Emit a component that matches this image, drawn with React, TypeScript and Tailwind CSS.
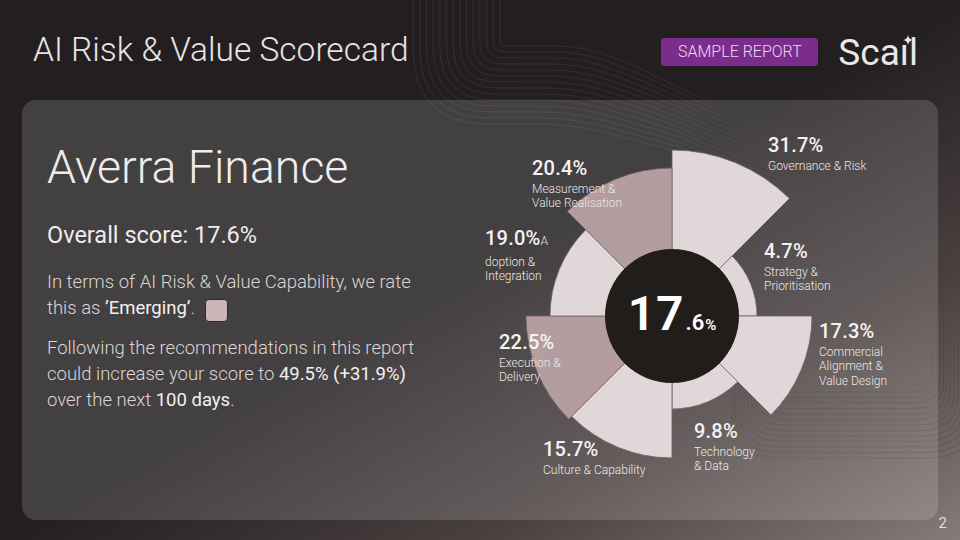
import React from "react";

const LIGHT = "#e2d7d8";
const DARK = "#b49da1";
const CX = 202;
const CY = 196;

const sectors = [
  { r: 166, fill: LIGHT },
  { r: 85, fill: LIGHT },
  { r: 140, fill: LIGHT },
  { r: 93, fill: LIGHT },
  { r: 142, fill: LIGHT },
  { r: 146, fill: DARK },
  { r: 122, fill: LIGHT },
  { r: 148, fill: DARK },
];

function pt(r: number, deg: number): [number, number] {
  const a = (deg * Math.PI) / 180;
  return [CX + r * Math.sin(a), CY - r * Math.cos(a)];
}

function sectorPath(r: number, a1: number, a2: number) {
  const [x1, y1] = pt(r, a1);
  const [x2, y2] = pt(r, a2);
  return `M ${CX} ${CY} L ${x1} ${y1} A ${r} ${r} 0 0 1 ${x2} ${y2} Z`;
}

type Label = {
  pct: string;
  suffix?: string;
  lines: string[];
  cls: string;
};

const labels: Label[] = [
  { pct: "31.7%", lines: ["Governance & Risk"], cls: "left-[298px] top-[13px]" },
  { pct: "20.4%", lines: ["Measurement &", "Value Realisation"], cls: "left-[62px] top-[36px]" },
  { pct: "19.0%", suffix: "A", lines: ["doption &", "Integration"], cls: "left-[15px] top-[106px]" },
  { pct: "4.7%", lines: ["Strategy &", "Prioritisation"], cls: "left-[294px] top-[119px]" },
  { pct: "17.3%", lines: ["Commercial", "Alignment &", "Value Design"], cls: "left-[349px] top-[199px]" },
  { pct: "22.5%", lines: ["Execution &", "Delivery"], cls: "left-[29px] top-[210px]" },
  { pct: "9.8%", lines: ["Technology", "& Data"], cls: "left-[224px] top-[299px]" },
  { pct: "15.7%", lines: ["Culture & Capability"], cls: "left-[73px] top-[317px]" },
];

function Decor() {
  const top: string[] = [];
  const n = 14;
  for (let i = 0; i < n; i++) {
    const t = i / (n - 1);
    const xv = 500 - 87 * t;
    const yh = 46 + 78 * t;
    const r = 6 + 70 * t;
    const hx = 555 - 15 * t;
    const y680 = 88 + 64 * t;
    top.push(
      `M ${xv} -2 L ${xv} ${yh - r} Q ${xv} ${yh} ${xv + r} ${yh} L ${hx} ${yh} C ${hx + 40} ${yh} ${hx + 70} ${yh + (y680 - yh) * 0.35} 680 ${y680} C 720 ${y680 + 18} 770 ${y680 + 40} 840 ${y680 + 60}`
    );
  }
  const right: string[] = [];
  const m = 13;
  for (let i = 0; i < m; i++) {
    const L = 732 + 3 * i;
    const B = 458 - 5.5 * i;
    const R = 975 - 3.5 * i;
    const r = 46 - 2 * i;
    right.push(
      `M ${L} 240 L ${L} ${B - r} Q ${L} ${B} ${L + r} ${B} L ${R - r} ${B} Q ${R} ${B} ${R} ${B - r} L ${R} 240`
    );
  }
  return (
    <svg className="absolute inset-0" width="960" height="540" viewBox="0 0 960 540" fill="none">
      <defs>
        <linearGradient id="fadeR" x1="0" y1="240" x2="0" y2="460" gradientUnits="userSpaceOnUse">
          <stop offset="0" stopColor="#000" stopOpacity="0" />
          <stop offset="0.55" stopColor="#000" stopOpacity="0.12" />
          <stop offset="1" stopColor="#000" stopOpacity="0.16" />
        </linearGradient>
        <linearGradient id="fadeT" x1="400" y1="0" x2="840" y2="0" gradientUnits="userSpaceOnUse">
          <stop offset="0" stopColor="#fff" stopOpacity="0.09" />
          <stop offset="0.6" stopColor="#fff" stopOpacity="0.08" />
          <stop offset="1" stopColor="#fff" stopOpacity="0" />
        </linearGradient>
      </defs>
      {top.map((d, i) => (
        <path key={"t" + i} d={d} stroke="url(#fadeT)" strokeWidth="0.8" />
      ))}
      {right.map((d, i) => (
        <path key={"r" + i} d={d} stroke="url(#fadeR)" strokeWidth="0.9" />
      ))}
    </svg>
  );
}

function Logo() {
  return (
    <div className="ml-[20px] mt-[1.5px] text-[37px] leading-none font-normal text-[#ebe7e7] flex">
      <span>Sca</span>
      <span className="relative">
        ı
        <svg className="absolute left-[3px] top-[1px]" width="10" height="10" viewBox="0 0 10 10">
          <path d="M5 0 Q5.7 4.3 10 5 Q5.7 5.7 5 10 Q4.3 5.7 0 5 Q4.3 4.3 5 0 Z" fill="#ebe7e7" />
        </svg>
      </span>
      <span>l</span>
    </div>
  );
}

function Chart() {
  return (
    <div className="relative w-[440px] h-[380px] mt-[20px]">
      <svg className="absolute inset-0" width="440" height="380" viewBox="0 0 440 380">
        {sectors.map((s, i) => (
          <path
            key={i}
            d={sectorPath(s.r, i * 45, (i + 1) * 45)}
            fill={s.fill}
            stroke="#6e6364"
            strokeWidth="0.8"
          />
        ))}
        <circle cx={CX} cy={CY} r="67" fill="#211d1b" />
      </svg>
      <div className="absolute left-[135px] top-[129px] w-[134px] h-[134px] flex items-center justify-center pb-[4px]">
        <div className="flex items-baseline text-white leading-none">
          <span className="text-[48px] font-semibold tracking-[0.02em]">17</span>
          <span className="text-[22px] font-semibold ml-[1px]">.6</span>
          <span className="text-[15px] font-semibold ml-[1px]">%</span>
        </div>
      </div>
      {labels.map((l) => (
        <div key={l.pct} className={"absolute whitespace-nowrap " + l.cls}>
          <div className="text-[20px] leading-[24px] font-medium text-[#f6f2f2] tracking-[0.01em]">
            {l.pct}
            {l.suffix && <span className="text-[12px] font-light text-[#ece6e6] tracking-normal">{l.suffix}</span>}
          </div>
          <div className="mt-[2px] text-[12px] leading-[14.4px] font-light text-[#ece6e6]">
            {l.lines.map((ln) => (
              <div key={ln}>{ln}</div>
            ))}
          </div>
        </div>
      ))}
    </div>
  );
}

export default function App() {
  return (
    <div className="relative w-[960px] h-[540px] overflow-hidden bg-[linear-gradient(to_bottom_right,#231f20_0%,#231f20_50%,#4a4040_75%,#867b77_100%)] font-['Roboto',sans-serif] text-[#ece8e8]">
      <Decor />
      <div className="relative flex flex-col h-full">
        <header className="flex items-start h-[100px] pl-[33px] pr-[42px] pt-[33px]">
          <h1 className="text-[33.5px] leading-none font-light text-[#e8e4e4]">AI Risk &amp; Value Scorecard</h1>
          <div className="ml-auto flex items-start -mt-[1px]">
            <div className="mt-[6px] w-[157px] h-[28px] rounded-[4px] bg-[#7b2d8e] flex items-center justify-center text-[16px] font-light text-[#eadcec]">
              SAMPLE REPORT
            </div>
            <Logo />
          </div>
        </header>
        <main className="mx-[22px] h-[420px] rounded-[14px] bg-white/15 flex">
          <div className="w-[448px] pl-[25px] pt-[44px]">
            <div className="text-[46.5px] leading-none font-light text-[#f0ecec]">Averra Finance</div>
            <div className="mt-[31px] text-[23.5px] leading-[26px] font-normal text-[#f0ecec]">Overall score: 17.6%</div>
            <p className="mt-[21px] text-[18.5px] leading-[26px] font-light text-[#dcd6d6] whitespace-nowrap">
              In terms of AI Risk &amp; Value Capability, we rate
              <br />
              this as <span className="font-normal text-[#f4f0f0]">’Emerging’</span>.
              <span className="relative top-[2px] inline-block w-[23px] h-[23px] ml-[10px] rounded-[4px] bg-[#cbb5b8] border border-[#2f2a2a] align-middle" />
            </p>
            <p className="mt-[14px] text-[18.5px] leading-[26px] font-light text-[#dcd6d6] whitespace-nowrap">
              Following the recommendations in this report
              <br />
              could increase your score to <span className="font-normal text-[#f4f0f0]">49.5% (+31.9%)</span>
              <br />
              over the next <span className="font-normal text-[#f4f0f0]">100 days</span>.
            </p>
          </div>
          <Chart />
        </main>
        <div className="flex justify-end pr-[13px] -mt-[4px] text-[15px] leading-none text-[#e4dede]">2</div>
      </div>
    </div>
  );
}
